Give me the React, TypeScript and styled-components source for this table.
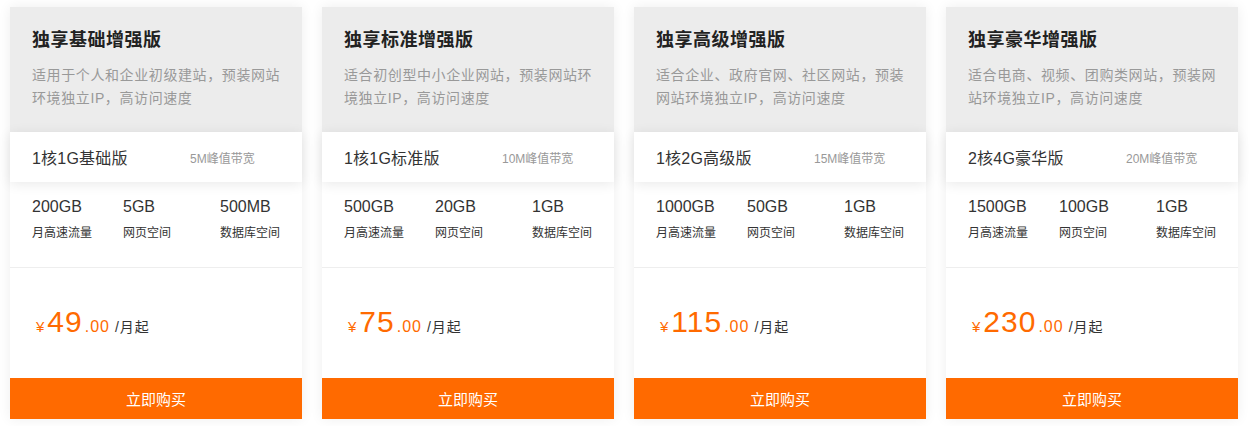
import React from 'react';
import styled, { createGlobalStyle } from 'styled-components';

interface Plan {
  title: string;
  desc: string;
  spec: string;
  bandwidth: string;
  traffic: string;
  web: string;
  db: string;
  price: string;
}

const plans: Plan[] = [
  {
    title: '独享基础增强版',
    desc: '适用于个人和企业初级建站，预装网站环境独立IP，高访问速度',
    spec: '1核1G基础版',
    bandwidth: '5M峰值带宽',
    traffic: '200GB',
    web: '5GB',
    db: '500MB',
    price: '49',
  },
  {
    title: '独享标准增强版',
    desc: '适合初创型中小企业网站，预装网站环境独立IP，高访问速度',
    spec: '1核1G标准版',
    bandwidth: '10M峰值带宽',
    traffic: '500GB',
    web: '20GB',
    db: '1GB',
    price: '75',
  },
  {
    title: '独享高级增强版',
    desc: '适合企业、政府官网、社区网站，预装网站环境独立IP，高访问速度',
    spec: '1核2G高级版',
    bandwidth: '15M峰值带宽',
    traffic: '1000GB',
    web: '50GB',
    db: '1GB',
    price: '115',
  },
  {
    title: '独享豪华增强版',
    desc: '适合电商、视频、团购类网站，预装网站环境独立IP，高访问速度',
    spec: '2核4G豪华版',
    bandwidth: '20M峰值带宽',
    traffic: '1500GB',
    web: '100GB',
    db: '1GB',
    price: '230',
  },
];

const GlobalStyle = createGlobalStyle`
  body {
    margin: 0;
    background: #ffffff;
    font-family: "Liberation Sans", "Noto Sans CJK SC", sans-serif;
    color: #333;
  }
`;

const Page = styled.div`
  display: flex;
  gap: 20px;
  padding: 7px 10px;
`;

const Card = styled.div`
  width: 292px;
  flex: none;
  background: #fff;
  box-shadow: 0 0 12px rgba(0, 0, 0, 0.07);
  display: flex;
  flex-direction: column;
`;

const Header = styled.div`
  background: #ececec;
  padding: 20px 20px 20px 22px;
  height: 125px;
  box-sizing: border-box;
`;

const Title = styled.h3`
  margin: 0;
  font-size: 18px;
  line-height: 26px;
  font-weight: bold;
  letter-spacing: 0.5px;
  color: #222;
`;

const Desc = styled.p`
  margin: 11px 0 0;
  font-size: 14px;
  line-height: 23px;
  letter-spacing: 0.6px;
  color: #999;
`;

const SpecRow = styled.div`
  position: relative;
  z-index: 1;
  height: 50px;
  display: flex;
  align-items: center;
  padding: 0 22px;
  background: #fff;
  box-shadow: 0 2px 12px rgba(0, 0, 0, 0.09);
`;

const SpecName = styled.span`
  width: 158px;
  font-size: 16px;
  letter-spacing: 0.2px;
  color: #333;
`;

const Bandwidth = styled.span`
  font-size: 12px;
  color: #999;
`;

const Stats = styled.div`
  display: grid;
  grid-template-columns: 91px 97px 1fr;
  padding: 14px 22px 24px;
  border-bottom: 1px solid #eee;
`;

const Stat = styled.div`
  display: flex;
  flex-direction: column;
`;

const StatValue = styled.span`
  font-size: 16px;
  line-height: 22px;
  color: #333;
`;

const StatLabel = styled.span`
  margin-top: 5px;
  font-size: 12px;
  line-height: 20px;
  color: #333;
`;

const PriceArea = styled.div`
  height: 110px;
  display: flex;
  align-items: center;
  padding: 0 24px 2px;
  box-sizing: border-box;
`;

const Price = styled.div`
  display: flex;
  align-items: baseline;
  color: #ff6a00;
`;

const Yen = styled.span`
  font-size: 15px;
  margin: 0 3px 0 2px;
`;

const Amount = styled.span`
  font-size: 30px;
  letter-spacing: 1px;
`;

const Cents = styled.span`
  font-size: 16px;
  letter-spacing: 1px;
  margin: 0 5px 0 2px;
`;

const Unit = styled.span`
  font-size: 14px;
  letter-spacing: 1px;
  color: #333;
`;

const BuyButton = styled.button`
  border: none;
  margin: 0;
  height: 41px;
  width: 100%;
  background: #ff6a00;
  color: #fff;
  font-family: inherit;
  font-size: 15px;
  cursor: pointer;
`;

export default function App() {
  return (
    <>
      <GlobalStyle />
      <Page>
        {plans.map((p) => (
          <Card key={p.title}>
            <Header>
              <Title>{p.title}</Title>
              <Desc>{p.desc}</Desc>
            </Header>
            <SpecRow>
              <SpecName>{p.spec}</SpecName>
              <Bandwidth>{p.bandwidth}</Bandwidth>
            </SpecRow>
            <Stats>
              <Stat>
                <StatValue>{p.traffic}</StatValue>
                <StatLabel>月高速流量</StatLabel>
              </Stat>
              <Stat>
                <StatValue>{p.web}</StatValue>
                <StatLabel>网页空间</StatLabel>
              </Stat>
              <Stat>
                <StatValue>{p.db}</StatValue>
                <StatLabel>数据库空间</StatLabel>
              </Stat>
            </Stats>
            <PriceArea>
              <Price>
                <Yen>¥</Yen>
                <Amount>{p.price}</Amount>
                <Cents>.00</Cents>
                <Unit>/月起</Unit>
              </Price>
            </PriceArea>
            <BuyButton>立即购买</BuyButton>
          </Card>
        ))}
      </Page>
    </>
  );
}
